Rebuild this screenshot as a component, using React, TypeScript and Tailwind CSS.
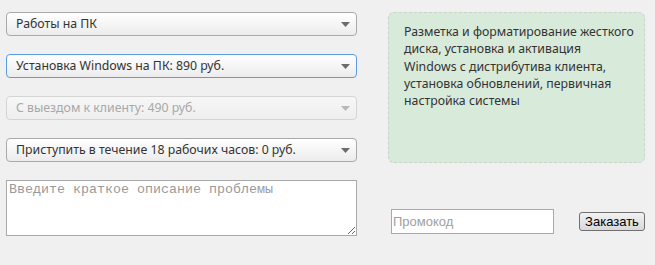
import React from "react"

const Arrow = ({ muted }: { muted?: boolean }) => (
  <svg width="9" height="5" viewBox="0 0 9 5" className="shrink-0">
    <path d="M0 0 L9 0 L4.5 5 Z" fill={muted ? "#b8b8b8" : "#6b6b6b"} />
  </svg>
)

const Select = ({
  label,
  focused,
  disabled,
}: {
  label: string
  focused?: boolean
  disabled?: boolean
}) => (
  <div
    className={`flex h-[24px] items-center justify-between rounded-[4px] border pl-[9px] pr-[6px] bg-gradient-to-b ${
      disabled
        ? "border-[#d4d4d4] from-[#f7f7f7] to-[#eeeeee] text-[#a8a8a8]"
        : focused
        ? "border-[#5b9be0] from-white to-[#ececec] text-[#333]"
        : "border-[#a9a9a9] from-white to-[#ececec] text-[#333]"
    }`}
  >
    <span className="truncate">{label}</span>
    <Arrow muted={disabled} />
  </div>
)

export default function App() {
  return (
    <div className="min-h-[265px] w-[655px] bg-[#f0f0f0] font-['Noto_Sans',sans-serif] text-[12.3px]">
      <div className="flex">
        {/* left: options */}
        <div className="ml-[6px] mt-[12px] flex w-[351px] flex-col gap-[18px]">
          <Select label="Работы на ПК" />
          <Select label="Установка Windows на ПК: 890 руб." focused />
          <Select label="С выездом к клиенту: 490 руб." disabled />
          <Select label="Приступить в течение 18 рабочих часов: 0 руб." />
          <textarea
            placeholder="Введите краткое описание проблемы"
            className="h-[56px] w-full border border-[#a9a9a9] bg-white px-[2px] py-[1px] font-['Liberation_Mono',monospace] text-[13.33px] leading-[16px] text-[#333] placeholder:text-[#9a9a9a] outline-none"
          />
        </div>

        {/* right: description + order */}
        <div className="ml-[31px] mt-[12px] flex w-[257px] flex-col">
          <div className="h-[151px] rounded-[6px] border border-dashed border-[#c9d3c9] bg-[#d8eada] pl-[15px] pr-[7px] pt-[10px] leading-[17.3px] text-[#333]">
            Разметка и форматирование жесткого диска, установка и активация
            <br />
            Windows с дистрибутива клиента, установка обновлений, первичная настройка системы
          </div>
          <div className="mt-[46px] flex items-start pl-[3px]">
            <input
              placeholder="Промокод"
              className="h-[25px] w-[163px] border border-[#a9a9a9] bg-white px-[1px] font-['Liberation_Sans',sans-serif] text-[13px] placeholder:text-[#a0a0a0] outline-none"
            />
            <button className="ml-[25px] mt-[3px] h-[19px] w-[66px] rounded-[3px] border border-[#707070] bg-gradient-to-b from-[#f2f2f2] to-[#d8d8d8] font-['Liberation_Sans',sans-serif] text-[13px] leading-[17px] text-black">
              Заказать
            </button>
          </div>
        </div>
      </div>
    </div>
  )
}
